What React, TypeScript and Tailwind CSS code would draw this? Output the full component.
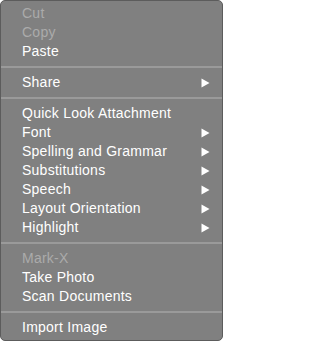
import React from "react";

type Item = { label: string; disabled?: boolean; sub?: boolean } | "sep";

const items: Item[] = [
  { label: "Cut", disabled: true },
  { label: "Copy", disabled: true },
  { label: "Paste" },
  "sep",
  { label: "Share", sub: true },
  "sep",
  { label: "Quick Look Attachment" },
  { label: "Font", sub: true },
  { label: "Spelling and Grammar", sub: true },
  { label: "Substitutions", sub: true },
  { label: "Speech", sub: true },
  { label: "Layout Orientation", sub: true },
  { label: "Highlight", sub: true },
  "sep",
  { label: "Mark-X", disabled: true },
  { label: "Take Photo" },
  { label: "Scan Documents" },
  "sep",
  { label: "Import Image" },
];

function Arrow() {
  return (
    <svg width="9" height="10" viewBox="0 0 9 10" className="block">
      <path d="M0.5 0.5 L8.5 5 L0.5 9.5 Z" fill="#ffffff" />
    </svg>
  );
}

export default function App() {
  return (
    <div className="w-[223px] h-[341px] bg-white">
      <div
        className="w-[223px] h-[341px] rounded-[5px] border border-[#5c5c5c] bg-[#808080] pt-[3px] pb-[3px] text-[14px] tracking-[0.25px]"
        style={{ fontFamily: '"Liberation Sans", Arial, sans-serif' }}
      >
        {items.map((it, i) =>
          it === "sep" ? (
            <div key={i} className="py-[5px]">
              <div className="h-[2px] bg-[#9a9a9a]" />
            </div>
          ) : (
            <div
              key={i}
              className={
                "h-[19px] leading-[19px] pl-[21px] pr-[12px] flex items-center justify-between " +
                (it.disabled ? "text-[#ababab]" : "text-white")
              }
            >
              <span>{it.label}</span>
              {it.sub && <Arrow />}
            </div>
          )
        )}
      </div>
    </div>
  );
}
